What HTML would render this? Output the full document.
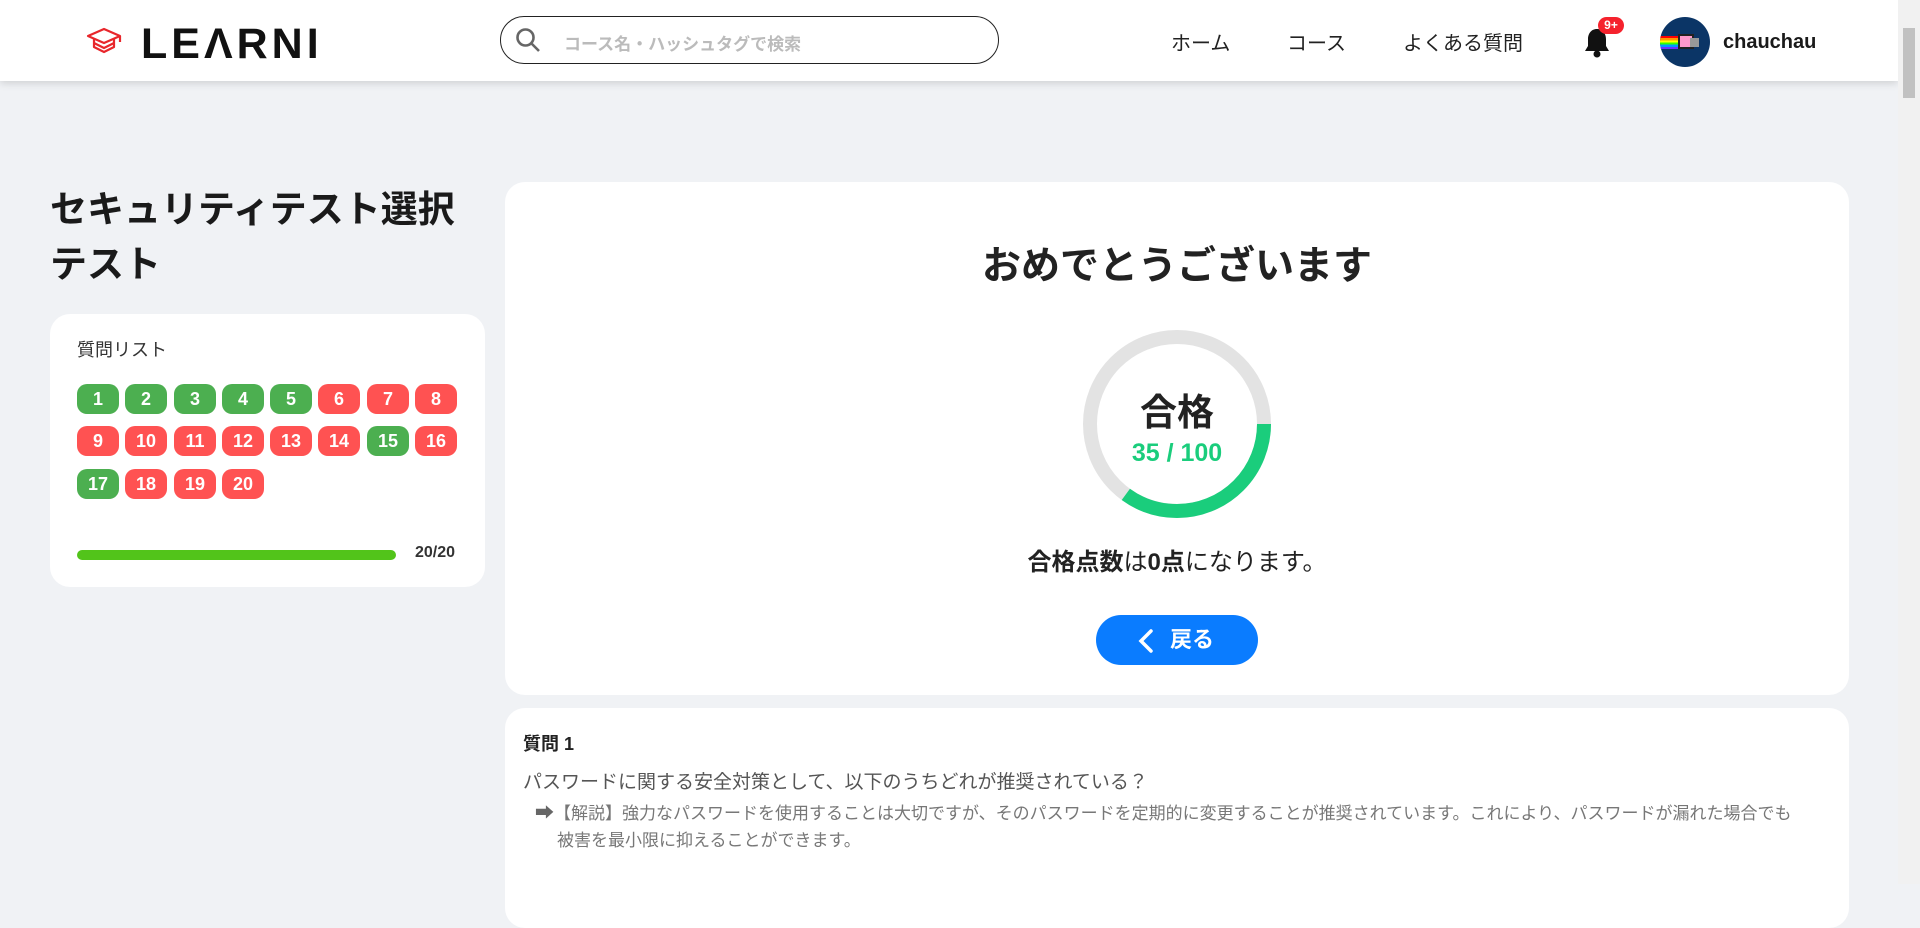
<!DOCTYPE html>
<html><head><meta charset="utf-8">
<style>
*{margin:0;padding:0;box-sizing:border-box}
body{width:1920px;height:884px;overflow:hidden;background:#f0f2f5;font-family:"Liberation Sans","Noto Sans CJK JP",sans-serif;color:#1a1a1a;position:relative}
.hdr{position:absolute;left:0;top:0;width:1898px;height:81px;background:#fff;box-shadow:0 2px 8px rgba(0,0,0,.15);z-index:2}
.sb{position:absolute;right:0;top:0;width:22px;height:884px;background:#f1f1f1;z-index:3}
.sb div{position:absolute;left:5px;top:28px;width:12px;height:70px;background:#c1c1c1}
.abs{position:absolute}
.logo{left:141px;top:20px;font-size:43px;font-weight:bold;letter-spacing:4px;color:#111;line-height:48px}
.search{left:500px;top:16px;width:499px;height:48px;border:1.5px solid #222;border-radius:24px}
.search span{position:absolute;left:63px;top:13px;font-size:17px;font-weight:bold;color:#bbb}
.nav{top:27px;font-size:20px;color:#222}
.badge{left:1598px;top:17px;width:26px;height:17px;background:#f5222d;border-radius:9px;color:#fff;font-size:12px;font-weight:bold;text-align:center;line-height:17px}
.title{left:50px;top:182px;font-size:37px;font-weight:bold;line-height:55px;width:430px}
.card{background:#fff;border-radius:20px;position:absolute}
.b{position:absolute;width:42px;height:30px;border-radius:10px;color:#fff;font-weight:bold;font-size:18px;text-align:center;line-height:30px}
.g{background:#4caf50}.r{background:#ff5252}
</style></head><body>
<div class="hdr">
  <svg class="abs" style="left:86px;top:26px" width="40" height="28" viewBox="0 0 40 28" fill="none" stroke="#e8262b" stroke-width="2.2" stroke-linejoin="round"><path d="M2 10 L18 3 L34 10 L18 17 Z"/><path d="M8 13 V21 L18 26 L28 21 V13"/><path d="M8 17 L18 22 L28 17"/><path d="M34 10 V16"/></svg>
  <div class="abs logo">LEΛRNI</div>
  <div class="abs search">
    <svg class="abs" style="left:14px;top:10px" width="26" height="26" viewBox="0 0 26 26" fill="none" stroke="#666" stroke-width="2.6"><circle cx="10.5" cy="10.5" r="8"/><path d="M16.5 16.5 L24 24"/></svg>
    <span>コース名・ハッシュタグで検索</span>
  </div>
  <div class="abs nav" style="left:1171px">ホーム</div>
  <div class="abs nav" style="left:1287px">コース</div>
  <div class="abs nav" style="left:1403px">よくある質問</div>
  <svg class="abs" style="left:1583px;top:27px" width="28" height="31" viewBox="0 0 28 31"><path d="M14 2 C8 2 5 7 5 12 V19 L2 24 H26 L23 19 V12 C23 7 20 2 14 2Z" fill="#111"/><circle cx="14" cy="27" r="3.5" fill="#111"/></svg>
  <div class="abs badge">9+</div>
  <div class="abs" style="left:1660px;top:17px;width:50px;height:50px;border-radius:50%;background:#0b3566;overflow:hidden">
    <div class="abs" style="left:0;top:19px;width:18px;height:13px;background:linear-gradient(#f00 0 17%,#f90 17% 34%,#ff0 34% 50%,#3f0 50% 67%,#09f 67% 84%,#63f 84%)"></div>
    <div class="abs" style="left:18px;top:17px;width:16px;height:15px;background:#f9c;border:2px solid #222"></div>
    <div class="abs" style="left:30px;top:21px;width:9px;height:9px;background:#999"></div>
  </div>
  <div class="abs" style="left:1723px;top:31px;font-size:20px;font-weight:bold">chauchau</div>
</div>
<div class="sb"><div></div></div>

<div class="abs title">セキュリティテスト選択テスト</div>
<div class="card" style="left:50px;top:314px;width:435px;height:273px">
  <div class="abs" style="left:27px;top:22px;font-size:18px;color:#333">質問リスト</div>
  <div class="b g" style="left:27px;top:70px">1</div><div class="b g" style="left:75px;top:70px">2</div><div class="b g" style="left:124px;top:70px">3</div><div class="b g" style="left:172px;top:70px">4</div><div class="b g" style="left:220px;top:70px">5</div><div class="b r" style="left:268px;top:70px">6</div><div class="b r" style="left:317px;top:70px">7</div><div class="b r" style="left:365px;top:70px">8</div>
  <div class="b r" style="left:27px;top:112px">9</div><div class="b r" style="left:75px;top:112px">10</div><div class="b r" style="left:124px;top:112px">11</div><div class="b r" style="left:172px;top:112px">12</div><div class="b r" style="left:220px;top:112px">13</div><div class="b r" style="left:268px;top:112px">14</div><div class="b g" style="left:317px;top:112px">15</div><div class="b r" style="left:365px;top:112px">16</div>
  <div class="b g" style="left:27px;top:155px">17</div><div class="b r" style="left:75px;top:155px">18</div><div class="b r" style="left:124px;top:155px">19</div><div class="b r" style="left:172px;top:155px">20</div>
  <div class="abs" style="left:27px;top:236px;width:319px;height:10px;border-radius:5px;background:#52c41a"></div>
  <div class="abs" style="left:365px;top:230px;font-size:16px;font-weight:bold;color:#333">20/20</div>
</div>

<div class="card" style="left:505px;top:182px;width:1344px;height:513px">
  <div class="abs" style="left:0;width:1344px;top:53px;text-align:center;font-size:39px;font-weight:bold;color:#222">おめでとうございます</div>
  <svg class="abs" style="left:578px;top:148px" width="188" height="188" viewBox="0 0 188 188">
    <circle cx="94" cy="94" r="87" fill="none" stroke="#e3e3e3" stroke-width="14"/>
    <circle cx="94" cy="94" r="87" fill="none" stroke="#1acd7c" stroke-width="14" stroke-dasharray="191.3 1000"/>
  </svg>
  <div class="abs" style="left:0;width:1344px;top:200px;text-align:center;font-size:37px;font-weight:bold;color:#222">合格</div>
  <div class="abs" style="left:0;width:1344px;top:257px;text-align:center;font-size:25px;font-weight:bold;color:#1acd7c">35 / 100</div>
  <div class="abs" style="left:0;width:1344px;top:360px;text-align:center;font-size:24px;color:#222"><b>合格点数</b>は<b>0点</b>になります。</div>
  <div class="abs" style="left:591px;top:433px;width:162px;height:50px;border-radius:25px;background:#0a7cff;color:#fff;font-size:22px;font-weight:bold;line-height:50px">
    <svg class="abs" style="left:42px;top:14px" width="16" height="24" viewBox="0 0 16 24" fill="none" stroke="#fff" stroke-width="3.5" stroke-linecap="round"><path d="M13 2 L3 12 L13 22"/></svg>
    <span class="abs" style="left:74px;top:0">戻る</span>
  </div>
</div>

<div class="card" style="left:505px;top:708px;width:1344px;height:220px">
  <div class="abs" style="left:18px;top:22px;font-size:18px;font-weight:bold;color:#222">質問 1</div>
  <div class="abs" style="left:18px;top:59px;font-size:19px;color:#555">パスワードに関する安全対策として、以下のうちどれが推奨されている？</div>
  <div class="abs" style="left:30px;top:92px;font-size:17px;color:#777;line-height:27px;width:1300px;white-space:nowrap"><span style="color:#666;font-size:19px">➡</span>【解説】強力なパスワードを使用することは大切ですが、そのパスワードを定期的に変更することが推奨されています。これにより、パスワードが漏れた場合でも<br><span style="padding-left:22px">被害を最小限に抑えることができます。</span></div>
</div>
</body></html>
